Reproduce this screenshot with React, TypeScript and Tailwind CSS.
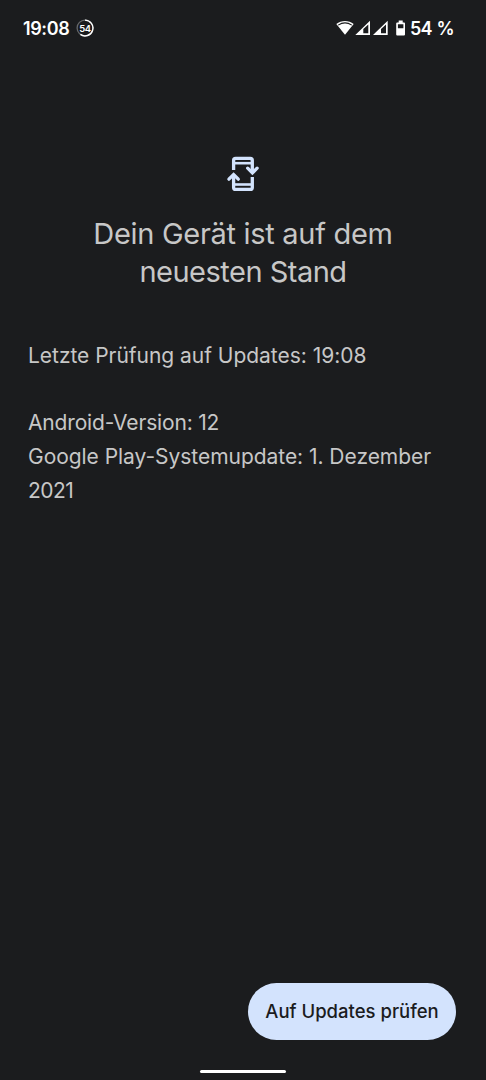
import React from 'react';

const StatusBar: React.FC = () => (
  <header className="flex h-14 items-center justify-between pl-[23px] pr-[33px] text-white">
    <div className="flex items-center gap-[7px]">
      <span className="w-[46px] whitespace-nowrap text-[18px] font-semibold tracking-[-0.4px]">19:08</span>
      <svg width="18" height="18" viewBox="0 0 18 18" fill="none">
        <circle cx="9" cy="9" r="7.9" stroke="#66686a" strokeWidth="1.3" />
        <path d="M9 1.1a7.9 7.9 0 1 1-4.6 14.3" stroke="#fff" strokeWidth="1.4" />
        <text x="9" y="12.5" textAnchor="middle" fill="#fff" fontSize="9.5" fontWeight="600" letterSpacing="-0.4">54</text>
      </svg>
    </div>
    <div className="flex items-center">
      <svg width="70" height="18" viewBox="0 0 70 18" fill="none">
        <path d="M0.3 5.1C5.2 1 12.8 1 17.7 5.1L9 15.8Z" fill="#fff" />
        <path d="M2.2 6.1C6.4 3.3 11.6 3.3 15.8 6.1" stroke="#1b1c1e" strokeWidth="1.1" />
        <path d="M19.3 16L34 1.8V16Z M27.3 9.9V14.3H32.3V5.5Z" fill="#fff" fillRule="evenodd" />
        <path d="M37 16L51.7 1.8V16Z M45 9.9V14.3H50V5.5Z" fill="#fff" fillRule="evenodd" />
        <path d="M62.7 1.5h4v2h1.3q1 0 1 1v11q0 1-1 1h-6.8q-1 0-1-1v-11q0-1 1-1h1.5Z M61.9 5.2v4.1h5.5V5.2Z" fill="#fff" fillRule="evenodd" />
      </svg>
      <span className="ml-[4px] w-[43px] whitespace-nowrap text-[18px] font-semibold tracking-[-0.8px] [word-spacing:1px]">54 %</span>
    </div>
  </header>
);

const UpdateIcon: React.FC = () => (
  <svg width="36" height="38" viewBox="0 0 36 38" fill="none" stroke="#d3e3fd" strokeWidth="3.3">
    <path d="M8.6 16V6.4q0-2 2-2h14.7q2 0 2 2V18.5" />
    <path d="M8.6 9.2h18.7" strokeWidth="2.6" />
    <path d="M22.7 14.2l4.7 4.7 4.7-4.7" strokeLinecap="round" />
    <path d="M27.3 23v10.4q0 2-2 2H10.6q-2 0-2-2V20.5" />
    <path d="M8.6 30.5h18.7" strokeWidth="2.6" />
    <path d="M3.9 25.2l4.7-4.7 4.7 4.7" strokeLinecap="round" />
  </svg>
);

const App: React.FC = () => {
  return (
    <div className="flex h-[1080px] w-[486px] flex-col bg-[#1b1c1e] font-['Inter','Liberation_Sans',sans-serif] text-[#c7c7c7]">
      <StatusBar />

      <main className="flex flex-1 flex-col">
        <div className="mt-[98px] flex justify-center">
          <UpdateIcon />
        </div>
        <h1 className="mt-[23px] text-center text-[29px] leading-[37.5px] font-normal">
          <span className="block tracking-[-0.3px]">Dein Gerät ist auf dem</span>
          <span className="block tracking-[-0.5px]">neuesten Stand</span>
        </h1>

        <div className="mt-[49px] pl-7 text-[21px] leading-[33.75px] whitespace-nowrap">
          <p className="tracking-[-0.03px]">Letzte Prüfung auf Updates: 19:08</p>
          <p className="mt-[33.5px] tracking-[-0.17px]">Android-Version: 12</p>
          <p className="tracking-[-0.04px]">
            Google Play-Systemupdate: 1. Dezember
            <br />
            <span className="tracking-[-0.5px]">2021</span>
          </p>
        </div>
      </main>

      <footer className="flex flex-col">
        <button
          type="button"
          className="mr-[30px] flex h-[57px] w-[208px] items-center justify-center self-end rounded-full bg-[#d3e3fd] text-[18.5px] font-medium whitespace-nowrap text-[#1b1c1e]"
        >
          Auf Updates prüfen
        </button>
        <div className="mt-[30px] mb-[7px] h-[3px] w-[86px] self-center rounded-full bg-white" />
      </footer>
    </div>
  );
};

export default App;
